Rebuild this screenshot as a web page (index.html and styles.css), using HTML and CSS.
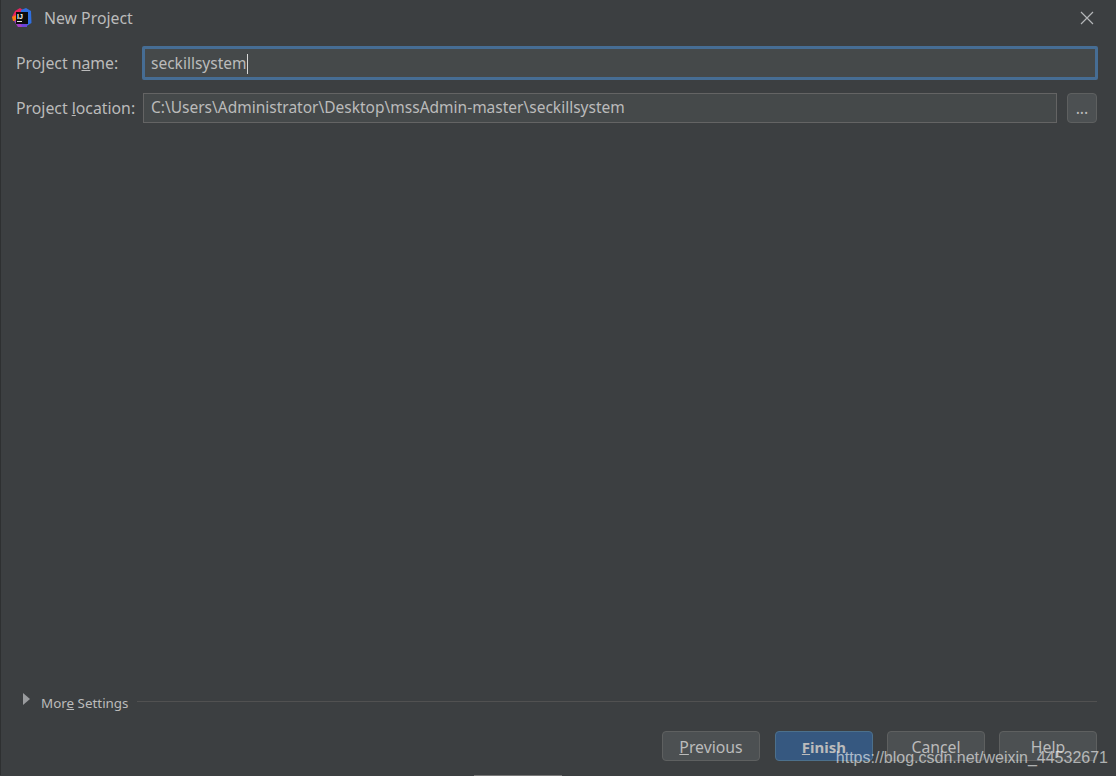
FILE: index.html
```html
<!DOCTYPE html>
<html>
  <head>
    <meta charset="utf-8" />
    <title>New Project</title>
    <link rel="stylesheet" href="styles.css">
  </head>
  <body>
    <div class="dialog">
      <header class="titlebar">
        <svg class="app-icon" width="20" height="20" viewBox="0 0 20 20">
          <path d="M0 9 L3 3 L8 0 L11 2 L8 12 L2 12 Z" fill="#e8225f" />
          <path d="M0 9 L4 7 L5 13 L1 13 Z" fill="#f97a12" />
          <path d="M2 13 L8 10 L13 19 L6 19 Z" fill="#a13cc4" />
          <path d="M9 2 L14 0 L19 3 L19.500 15 L13 19 L8 12 Z" fill="#2f6fe0" />
          <path d="M8 12 L15 6 L15 19 L10 19 Z" fill="#6a45d8" />
          <rect x="4" y="4" width="12" height="12" fill="#0c0c0c" />
          <text class="app-icon-text" x="5" y="10.800">IJ</text>
          <rect x="5" y="13" width="5" height="1" fill="#e4e4e4" />
        </svg>
        <span class="title">New Project</span>
        <svg class="close" width="14" height="14" viewBox="0 0 14 14">
          <path d="M1 1 L13 13 M13 1 L1 13" stroke="#b4b6b8" stroke-width="1.2" fill="none" />
        </svg>
      </header>

      <main class="form">
        <label class="label">Project n<u>a</u>me:</label>
        <div class="input input-focus">seckillsystem<span class="caret"></span></div>

        <label class="label">Project <u>l</u>ocation:</label>
        <div class="location">
          <div class="input">C:\Users\Administrator\Desktop\mssAdmin-master\seckillsystem</div>
          <button class="btn browse">...</button>
        </div>
      </main>

      <div class="more">
        <span class="arrow"></span>
        <span class="more-text">Mor<u>e</u> Settings</span>
        <span class="more-line"></span>
      </div>

      <footer class="buttons">
        <button class="btn action previous"><u>P</u>revious</button>
        <button class="btn action primary"><u>F</u>inish</button>
        <button class="btn action">Cancel</button>
        <button class="btn action">Help</button>
      </footer>
    </div>
    <div class="taskbar-sliver"></div>
    <div class="watermark">https://blog.csdn.net/weixin_44532671</div>
  </body>
</html>
```

FILE: styles.css
```css
* {
  box-sizing: border-box;
}
html,
body {
  margin: 0;
  height: 100%;
  overflow: hidden;
}
body {
  background-color: #3c3f41;
  color: #bbbbbb;
  font-family: "Noto Sans", "Open Sans", sans-serif;
  font-size: 15.8px;
  position: relative;
}
.dialog {
  height: 775px;
  display: flex;
  flex-direction: column;
  border-left: 1px solid #2e3031;
}
.titlebar {
  display: flex;
  align-items: center;
  height: 36px;
  padding: 0 22px 0 11px;
}
.app-icon {
  margin-top: -1px;
}
.app-icon-text {
  font-family: "Liberation Sans", sans-serif;
  font-size: 7px;
  font-weight: 700;
  fill: #fff;
}
.title {
  margin-left: 12px;
}
.close {
  margin-left: auto;
}
.form {
  display: grid;
  grid-template-columns: 127px 1fr;
  align-items: center;
  row-gap: 13px;
  padding: 10px 19px 0 15px;
}
.label {
  line-height: 20px;
}
.input {
  height: 30px;
  line-height: 27px;
  padding: 0 7px;
  background: #45494a;
  border: 1px solid #646464;
  color: #bbbbbb;
  font-size: 15.5px;
  flex: 1;
}
.input-focus {
  height: 34px;
  margin: 0 -1px;
  line-height: 28px;
  padding: 0 5px 0 6px;
  border: 3px solid #466d94;
  border-radius: 2px;
}
.caret {
  display: inline-block;
  width: 1px;
  height: 20px;
  margin-left: 1px;
  vertical-align: -5px;
  background: #d8d8d8;
}
.location {
  display: flex;
  gap: 10px;
}
.btn {
  font-family: inherit;
  font-size: 15.8px;
  color: #bbbbbb;
  background: #4c5052;
  border: 1px solid #5e6060;
  border-radius: 4px;
  padding: 0;
}
.browse {
  width: 30px;
  height: 30px;
  line-height: 24px;
}
.more {
  display: flex;
  align-items: center;
  margin-top: auto;
  height: 20px;
  margin-bottom: 20px;
  padding: 0 19px 0 22px;
}
.arrow {
  width: 0;
  height: 0;
  border-left: 7px solid #9a9c9e;
  border-top: 6px solid transparent;
  border-bottom: 6px solid transparent;
  margin-top: -4px;
}
.more-text {
  margin-left: 11px;
  font-size: 13.4px;
  position: relative;
  top: 2px;
}
.more-line {
  flex: 1;
  height: 1px;
  margin: 0 0 0 8px;
  background: #515151;
}
.buttons {
  display: flex;
  justify-content: flex-end;
  gap: 14px;
  padding: 0 19px 14px 0;
}
.action {
  width: 98px;
  height: 30px;
  padding-top: 2px;
}
.previous {
  margin-right: 1px;
}
.primary {
  background: #365880;
  border-color: #4c708c;
  font-size: 15px;
  font-weight: 700;
}
.taskbar-sliver {
  position: absolute;
  left: 474px;
  bottom: 0;
  width: 88px;
  height: 1px;
  background: #777;
}
.watermark {
  position: absolute;
  right: 8px;
  bottom: 9px;
  font-family: "Liberation Sans", Arial, sans-serif;
  font-size: 16px;
  line-height: 19px;
  color: rgba(255, 255, 255, 0.6);
}
```
